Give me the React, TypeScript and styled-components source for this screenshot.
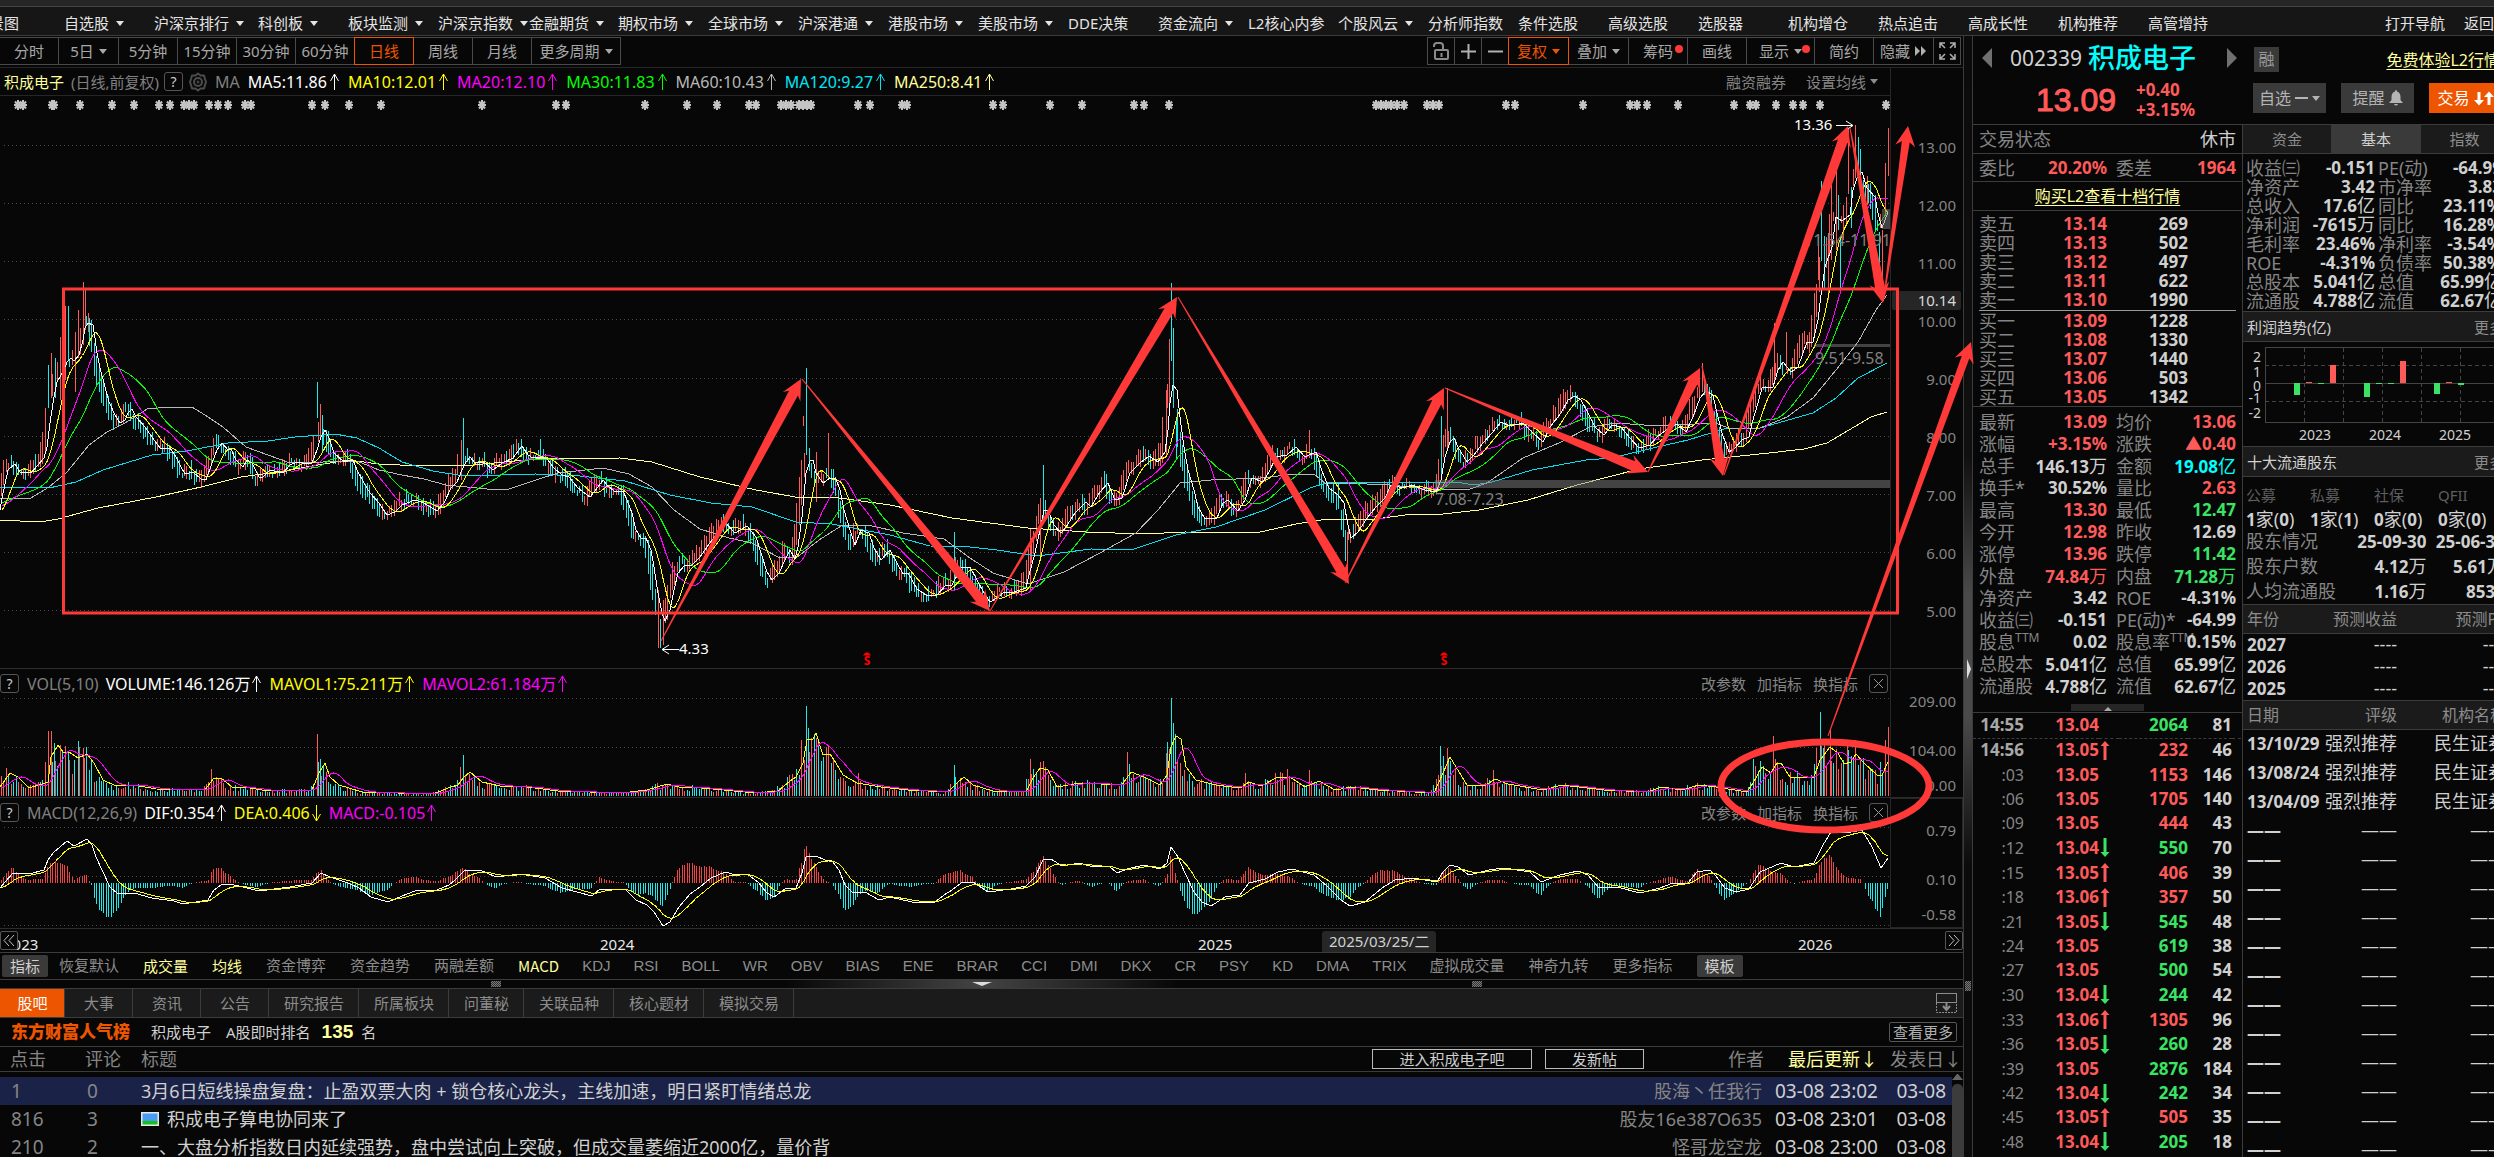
import React from "react";
import styled, { createGlobalStyle } from "styled-components";

const UI = `"Noto Sans", "Noto Sans CJK SC", sans-serif`;
const ARIAL = `"Liberation Sans", "Noto Sans CJK SC", sans-serif`;
const C = {
  bg: "#070707",
  bar: "#161616",
  panel: "#1b1b1b",
  line: "#3c3c3c",
  soft: "#262626",
  text: "#d0d0d0",
  dim: "#858585",
  red: "#ff5a5a",
  green: "#3be364",
  cyan: "#00ffff",
  yellow: "#ffff9c",
  orange: "#ee5500",
  mark: "#ff3838",
};

const Global = createGlobalStyle`
  * { box-sizing: border-box; }
  body { margin: 0; background: ${C.bg}; font-family: ${UI}; font-size: 15px; line-height: 18px; color: ${C.text}; }
  button { font: inherit; color: inherit; background: none; border: 0; padding: 0; margin: 0; white-space: nowrap; cursor: pointer; }
  svg { display: block; }
  table { border-collapse: collapse; border-spacing: 0; }
  th, td { padding: 0; font-weight: 400; text-align: left; white-space: nowrap; }
`;

/* ---------- page frame ---------- */

const Page = styled.div`
  display: flex;
  flex-direction: column;
  height: 100vh;
  overflow: hidden;
`;
const TitleStrip = styled.div`
  flex: none;
  height: 7px;
  background: #262626;
  border-bottom: 1px solid #444;
`;
const MenuBar = styled.nav`
  flex: none;
  display: flex;
  height: 29px;
  margin-left: -26px;
  padding-top: 4px;
  background: ${C.bar};
  border-bottom: 1px solid ${C.line};
`;
const MenuItem = styled.button<{ $w: number }>`
  flex: none;
  width: ${(p) => p.$w}px;
  display: flex;
  align-items: center;
  gap: 7px;
  color: #e4e4e4;
`;
const MenuEnd = styled.div`
  display: flex;
  gap: 19px;
  margin-left: auto;
  color: #e4e4e4;
`;
const Caret = styled.i<{ $color?: string }>`
  flex: none;
  border: 4px solid transparent;
  border-top: 5px solid ${(p) => p.$color || "#e4e4e4"};
  border-bottom: 0;
`;
const Body = styled.div`
  flex: 1;
  display: flex;
  min-height: 0;
`;
const Left = styled.main`
  flex: 1;
  min-width: 0;
  border-right: 1px solid ${C.line};
`;
const Splitter = styled.div`
  position: relative;
  flex: none;
  width: 8px;
  background: linear-gradient(#0b0b0b 0, #101010 420px, #4a4a4a 560px, #4a4a4a 680px, #0b0b0b 830px);
`;
const SplitArrow = styled.i`
  position: absolute;
  left: 3px;
  top: 623px;
  border: 10px solid transparent;
  border-left: 4px solid #ddd;
  border-right: 0;
`;
const Grip = styled.i<{ $x: string; $y: string; $w: number; $h: number }>`
  position: absolute;
  left: ${(p) => p.$x};
  top: ${(p) => p.$y};
  width: ${(p) => p.$w}px;
  height: ${(p) => p.$h}px;
  background: repeating-conic-gradient(#777 0 25%, #333 0 50%) 0 0 / 2px 2px;
`;

/* ---------- chart toolbar ---------- */

const Toolbar = styled.div`
  display: flex;
  justify-content: space-between;
  height: 32px;
  padding: 1px 2px 0 0;
  border-bottom: 1px solid ${C.soft};
`;
const ToolGroup = styled.div`
  display: flex;
  height: 28px;
`;
const Tool = styled.button<{ $w: number; $on?: boolean }>`
  position: relative;
  display: flex;
  align-items: center;
  justify-content: center;
  gap: 5px;
  width: ${(p) => p.$w + 1}px;
  margin-left: -1px;
  z-index: ${(p) => (p.$on ? 1 : 0)};
  border: 1px solid ${(p) => (p.$on ? C.orange : "#4a4a4a")};
  color: ${(p) => (p.$on ? C.orange : "#a8a8a8")};
`;
const Dot = styled.i`
  position: absolute;
  right: 4px;
  top: 7px;
  width: 8px;
  height: 8px;
  border-radius: 4px;
  background: ${C.mark};
`;

/* ---------- chart panes ---------- */

const Charts = styled.section`
  position: relative;
`;
const Pane = styled.div`
  display: grid;
  grid-template-columns: minmax(0, 1fr) 73px;
  border-bottom: 1px solid #2c2c2c;
`;
const PaneHead = styled.header<{ $h: number; $rule?: boolean }>`
  display: flex;
  align-items: center;
  height: ${(p) => p.$h}px;
  padding-left: ${(p) => (p.$rule ? 4 : 0)}px;
  border-bottom: ${(p) => (p.$rule ? `1px solid ${C.soft}` : 0)};
  font-size: 16px;
  line-height: 20px;
  white-space: nowrap;
`;
const StockName = styled.span`
  font-size: 15px;
  color: ${C.yellow};
  margin-right: 7px;
`;
const Faint = styled.span`
  color: #808080;
  margin-right: 8px;
`;
const FaintSmall = styled(Faint)`
  font-size: 15px;
  margin-right: 5px;
`;
const HelpBox = styled.button`
  flex: none;
  width: 19px;
  height: 19px;
  border: 1px solid #555;
  border-radius: 3px;
  line-height: 17px;
  font-size: 14px;
  color: #ccc;
`;
const SubHelp = styled(HelpBox)`
  margin-right: 8px;
`;
const HeadValue = styled.span<{ $c: string }>`
  display: flex;
  align-items: center;
  gap: 2px;
  margin-right: 8px;
  color: ${(p) => p.$c};
`;
const SubValue = styled(HeadValue)`
  gap: 1px;
  margin-right: 7px;
`;
const GearSlot = styled.span`
  margin: 0 8px 0 6px;
`;
const HeadRight = styled.div`
  display: flex;
  align-items: center;
  gap: 11px;
  margin-left: auto;
  padding-right: 2px;
  font-size: 15px;
  color: ${C.dim};
`;
const AverageTools = styled(HeadRight)`
  gap: 20px;
  padding-right: 12px;
`;
const CaretTool = styled.button`
  display: flex;
  align-items: center;
  gap: 4px;
`;
const CloseBox = styled(HelpBox)`
  display: grid;
  place-items: center;
`;
const Plot = styled.svg<{ $h: number }>`
  width: 100%;
  height: ${(p) => p.$h}px;
`;
const PriceAxis = styled.ol`
  position: relative;
  list-style: none;
  margin: 0;
  padding: 50px 7px 0 0;
  border-left: 1px solid ${C.soft};
  text-align: right;
  color: ${C.dim};
`;
const PriceTick = styled.li`
  line-height: 58px;
`;
const PriceTag = styled.li`
  position: absolute;
  top: 223px;
  left: 1px;
  right: 2px;
  padding-right: 5px;
  line-height: 19px;
  border-radius: 2px;
  background: #262626;
  color: #d8d8d8;
`;
const SubAxis = styled.ol<{ $boxed?: boolean }>`
  list-style: none;
  display: grid;
  grid-template-rows: 49px 49px 22px;
  align-items: center;
  align-content: start;
  margin: 0;
  padding: 6px 6px 0 0;
  border: 1px solid ${(p) => (p.$boxed ? C.soft : "transparent")};
  border-left-color: ${C.soft};
  text-align: right;
  color: ${C.dim};
`;
const Overlay = styled.svg`
  position: absolute;
  left: 0;
  top: 0;
  width: 100%;
  height: 861px;
  overflow: visible;
  pointer-events: none;
  z-index: 3;
`;
const DateAxis = styled.div`
  position: relative;
  display: grid;
  grid-template-columns: 596fr 598fr 600fr 169fr;
  height: 24px;
  padding-top: 5px;
  border-bottom: 1px solid ${C.line};
  color: #e8e8e8;
`;
const Year = styled.span`
  padding-left: 4px;
  line-height: 20px;
`;
const DateTag = styled.span`
  position: absolute;
  left: 67%;
  top: 2px;
  margin-left: 7px;
  width: 114px;
  line-height: 21px;
  text-align: center;
  border-radius: 3px 3px 0 0;
  background: #262626;
  color: ${C.text};
`;
const PageButton = styled.button<{ $side: "left" | "right" }>`
  position: absolute;
  ${(p) => p.$side}: 0;
  top: 2px;
  width: 18px;
  height: 19px;
  display: grid;
  place-items: center;
  border: 1px solid #555;
  border-radius: 2px;
  background: ${C.bg};
`;

/* ---------- indicator tabs ---------- */

const Indicators = styled.div`
  display: flex;
  align-items: center;
  gap: 24px;
  height: 27px;
  padding-left: 2px;
  border-bottom: 1px solid ${C.line};
`;
const Indicator = styled.button<{ $on?: boolean; $latin?: boolean }>`
  margin-right: ${(p) => (p.$latin ? -1 : 0)}px;
  font-family: ${(p) => (p.$on ? `"Noto Sans CJK SC", sans-serif` : ARIAL)};
  color: ${(p) => (p.$on ? C.yellow : "#8c8c8c")};
`;
const IndicatorChip = styled.button`
  width: 46px;
  height: 22px;
  background: #3a3a3a;
  border-radius: 2px;
  color: ${C.text};
  &:first-child { margin-right: -13px; }
`;
const HSplit = styled.div`
  position: relative;
  height: 9px;
  border-bottom: 1px solid ${C.line};
  background: linear-gradient(90deg, ${C.bg} 40%, #444 50%, ${C.bg} 60%);
  display: flex;
  justify-content: center;
  padding-top: 2px;
`;
const HArrow = styled.i`
  height: 4px;
  border: 10px solid transparent;
  border-top: 4px solid #ddd;
  border-bottom: 0;
`;

/* ---------- forum ---------- */

const NewsTabs = styled.div`
  display: flex;
  align-items: stretch;
  height: 29px;
  background: ${C.panel};
  border-bottom: 1px solid ${C.line};
`;
const NewsTab = styled.button<{ $on?: boolean }>`
  min-width: ${(p) => (p.$on ? 65 : 68)}px;
  padding: 0 14px 0 15px;
  border-right: 1px solid ${C.line};
  background: ${(p) => (p.$on ? C.orange : "none")};
  color: ${(p) => (p.$on ? "#fff" : "#8c8c8c")};
`;
const DockButton = styled.button`
  margin: 0 6px 0 auto;
`;
const RankRow = styled.div`
  display: flex;
  align-items: center;
  height: 29px;
  padding: 0 6px 0 11px;
  border-bottom: 1px solid ${C.line};
`;
const RankLogo = styled.strong`
  width: 140px;
  font-size: 17px;
  font-weight: 900;
  color: ${C.orange};
`;
const RankName = styled.span`
  margin-right: 15px;
`;
const RankNumber = styled.strong`
  margin: 0 8px 0 11px;
  font-family: ${ARIAL};
  font-size: 19px;
  color: ${C.yellow};
`;
const MoreButton = styled.button`
  margin-left: auto;
  width: 68px;
  height: 20px;
  line-height: 18px;
  border: 1px solid #555;
  border-radius: 2px;
  color: #b0b0b0;
`;
const Forum = styled.div`
  position: relative;
`;
const PostTable = styled.table`
  width: 100%;
  table-layout: fixed;
  font-size: 18px;
  line-height: 22px;
`;
const PostHead = styled.thead`
  color: ${C.dim};
  th { height: 24px; border-bottom: 1px solid ${C.line}; }
`;
const Spacer = styled.tr`
  height: 6px;
`;
const PostRow = styled.tr<{ $on?: boolean }>`
  height: 28px;
  background: ${(p) => (p.$on ? "#1a2347" : "none")};
`;
const NumCell = styled.td<{ $pad: number }>`
  padding-left: ${(p) => p.$pad}px;
  font-size: 19px;
  color: ${C.dim};
`;
const HeadCell = styled.th<{ $pad?: number; $right?: number; $hot?: boolean }>`
  padding-left: ${(p) => p.$pad || 0}px;
  ${(p) => p.$right !== undefined && `text-align: right; padding-right: ${p.$right}px;`}
  ${(p) => p.$hot && `color: ${C.yellow};`}
`;
const TitleHead = styled.div`
  display: flex;
  align-items: center;
  gap: 13px;
  padding-right: 1px;
`;
const TitleLabel = styled.span`
  flex: 1;
`;
const OutlineButton = styled.button<{ $w: number }>`
  width: ${(p) => p.$w}px;
  height: 20px;
  line-height: 18px;
  font-size: 15px;
  border: 1px solid #bbb;
  color: ${C.text};
`;
const TitleCell = styled.td`
  overflow: hidden;
`;
const PostTitle = styled.a`
  display: flex;
  align-items: center;
  gap: 8px;
  color: ${C.text};
  text-decoration: none;
`;
const EndCell = styled.td<{ $right: number; $dim?: boolean }>`
  text-align: right;
  padding-right: ${(p) => p.$right}px;
  font-size: ${(p) => (p.$dim ? 18 : 19)}px;
  color: ${(p) => (p.$dim ? C.dim : C.text)};
`;
const ScrollTrack = styled.div`
  position: absolute;
  right: 0;
  top: 27px;
  bottom: 0;
  width: 11px;
  background: ${C.bg};
`;
const ScrollUp = styled.i`
  display: block;
  border: 5px solid transparent;
  border-bottom: 6px solid #666;
  border-top: 0;
  margin-bottom: 4px;
`;
const ScrollThumb = styled.i`
  display: block;
  height: 400px;
  background: #3c3c3c;
  border-radius: 5px 5px 0 0;
`;

/* ---------- quote panel ---------- */

const Right = styled.aside`
  flex: none;
  width: 522px;
  overflow: hidden;
  border-left: 1px solid ${C.line};
`;
const QuoteHead = styled.header`
  display: grid;
  grid-template-columns: 270px 265px;
  height: 89px;
  border-bottom: 1px solid ${C.line};
`;
const QuoteName = styled.div`
  display: flex;
  align-items: center;
  height: 44px;
  padding: 0 6px 0 9px;
`;
const Prev = styled.button`
  border: 10px solid transparent;
  border-right: 10px solid #707070;
  border-left: 0;
`;
const Next = styled.button`
  margin-left: auto;
  border: 10px solid transparent;
  border-left: 10px solid #707070;
  border-right: 0;
`;
const Code = styled.span`
  margin: 0 6px 0 18px;
  font-size: 21px;
`;
const Name = styled.strong`
  font-size: 27px;
  line-height: 32px;
  font-weight: 500;
  color: ${C.cyan};
`;
const QuotePrice = styled.div`
  display: flex;
  align-items: center;
  gap: 20px;
  padding: 0 0 0 63px;
  font-weight: 700;
  font-size: 17px;
  line-height: 20px;
  color: ${C.red};
`;
const BigPrice = styled.span`
  font-family: ${ARIAL};
  font-size: 32px;
  font-weight: 400;
  line-height: 32px;
  -webkit-text-stroke: 1px ${C.red};
`;
const Stack = styled.div`
  display: flex;
  flex-direction: column;
`;
const HeadTop = styled.div`
  display: flex;
  justify-content: space-between;
  align-items: center;
  height: 47px;
  padding: 0 8px 0 11px;
`;
const Badge = styled.span`
  width: 25px;
  line-height: 25px;
  text-align: center;
  font-size: 16px;
  background: #3a3a3a;
  color: #999;
`;
const Link = styled.a`
  font-size: 16px;
  color: ${C.yellow};
  text-underline-offset: 3px;
  white-space: nowrap;
`;
const HeadActions = styled.div`
  display: flex;
  gap: 15px;
  padding-left: 10px;
`;
const Action = styled.button<{ $hot?: boolean }>`
  display: flex;
  align-items: center;
  justify-content: center;
  gap: 4px;
  width: 73px;
  height: 30px;
  font-size: 16px;
  background: ${(p) => (p.$hot ? C.orange : "#3a3a3a")};
  color: ${(p) => (p.$hot ? "#fff" : "#b4b4b4")};
`;
const Dash = styled.i`
  width: 13px;
  height: 2px;
  background: #b4b4b4;
`;
const Columns = styled.div`
  display: grid;
  grid-template-columns: 270px 265px;
`;
const ColA = styled.section`
  border-right: 1px solid ${C.line};
`;
const ColB = styled.section`
  min-width: 0;
`;
const Status = styled.div<{ $h: number }>`
  display: flex;
  align-items: center;
  justify-content: space-between;
  height: ${(p) => p.$h}px;
  padding: 0 6px;
  font-size: 18px;
  border-bottom: 1px solid ${C.line};
`;
const LinkRow = styled(Status)`
  justify-content: center;
`;
const Label = styled.span`
  color: ${C.dim};
  font-size: 18px;
  font-weight: 400;
`;
const Bold = styled.span<{ $c?: string }>`
  font-size: 17px;
  font-weight: 700;
  color: ${(p) => p.$c || C.text};
  text-align: right;
`;
const Thin = styled.span`
  font-weight: 400;
  font-size: 18px;
`;
const Book = styled.div<{ $sell?: boolean }>`
  margin: 0 6px;
  padding: ${(p) => (p.$sell ? "3px 0 1px" : "0")};
  border-bottom: ${(p) => (p.$sell ? "1px solid #999" : 0)};
`;
const BookRow = styled.div`
  display: grid;
  grid-template-columns: 40px 88px 81px;
  align-items: center;
  height: 19px;
`;
const Pairs = styled.div<{ $h: number; $pad: string; $cols: string }>`
  display: grid;
  grid-template-columns: ${(p) => p.$cols};
  grid-auto-rows: ${(p) => p.$h}px;
  align-items: center;
  padding: ${(p) => p.$pad};
  border-bottom: 1px solid ${C.line};
  white-space: nowrap;
`;
const QuotePairs = styled(Pairs)`
  border-top: 1px solid ${C.line};
  border-bottom: 0;
`;
const QuoteValue = styled.span`
  display: flex;
  justify-content: flex-end;
`;
const Sup = styled.sup`
  font-size: 12px;
  line-height: 10px;
`;
const FoldRow = styled.div`
  height: 16px;
  padding-top: 7px;
  border-bottom: 1px solid ${C.line};
`;
const Fold = styled.button`
  display: flex;
  justify-content: center;
  width: 73px;
  height: 7px;
  margin: 0 auto;
  padding-top: 1px;
  background: #262626;
`;
const FoldMark = styled.i`
  border: 4px solid transparent;
  border-bottom: 4px solid #aaa;
  border-top: 0;
`;
const Ticks = styled.table`
  width: 268px;
  table-layout: fixed;
`;
const TickRow = styled.tr`
  height: 24px;
  &:nth-child(3n) { height: 25px; }
  &:nth-child(6n + 1) { height: 25px; }
  &:first-child td { border-bottom: 1px dashed ${C.line}; }
`;
const TickCell = styled.td<{ $c?: string; $thin?: boolean }>`
  text-align: right;
  font-size: ${(p) => (p.$thin ? 16 : 17)}px;
  font-weight: ${(p) => (p.$thin ? 400 : 700)};
  color: ${(p) => p.$c || C.text};
`;
const TickArrow = styled.td`
  padding-left: 1px;
`;
const BTabs = styled.div`
  display: grid;
  grid-template-columns: 88px 90px 87px;
  height: 29px;
  border-bottom: 1px solid ${C.line};
  background: ${C.panel};
`;
const BTab = styled.button<{ $on?: boolean }>`
  background: ${(p) => (p.$on ? "#3a3a3a" : "none")};
  color: ${(p) => (p.$on ? C.text : "#8c8c8c")};
`;
const SectionHead = styled.h3`
  display: flex;
  align-items: center;
  justify-content: space-between;
  height: 30px;
  margin: 0;
  padding: 0 4px;
  font-size: 15px;
  font-weight: 400;
  background: ${C.panel};
  border-bottom: 1px solid ${C.line};
`;
const MoreLink = styled.a`
  color: #8c8c8c;
  text-decoration: none;
`;
const ProfitBox = styled.div`
  border-bottom: 1px solid ${C.line};
`;
const ProfitChart = styled.svg`
  width: 265px;
  height: 104px;
`;
const Funds = styled.table`
  width: 256px;
  margin-left: 3px;
  table-layout: fixed;
  th { height: 32px; padding-top: 3px; font-size: 15px; color: #5e5e5e; }
  td { height: 20px; }
`;
const Holders = styled.table`
  width: 259px;
  margin-left: 3px;
  th, td { height: 25px; }
  td { text-align: right; }
`;
const Report = styled.table<{ $row: number }>`
  width: 265px;
  table-layout: fixed;
  border-top: 1px solid ${C.line};
  thead tr { height: 29px; background: ${C.panel}; }
  thead th { border-bottom: 1px solid ${C.line}; font-size: 16px; color: #8c8c8c; }
  tbody tr { height: ${(p) => p.$row}px; }
  th:first-child, td:first-child { padding-left: 4px; }
  th:nth-child(2), td:nth-child(2) { text-align: right; }
  th:last-child, td:last-child { text-align: right; padding-right: 2px; }
`;

/* ---------- series ---------- */

type Pt = [number, number];
const parse = (s: string): Pt[] => s.trim().split(/\s+/).map((p) => p.split(",").map(Number) as Pt);

const MA5 = parse(`-90,500 -30,496 -14,514 0,510 2,498 8,470 15,464 20,472 31,473 38,465 44,458 47,447 50,423 54,397 57,382 61,375 64,370 67,362 71,358 74,361 79,355 83,340 85,328 88,323 93,325 95,338 97,353 100,368 104,383 109,402 115,415 120,423 125,420 128,413 132,409 136,417 145,427 152,437 160,448 170,448 176,457 181,467 185,474 193,472 201,479 206,480 212,463 217,450 222,443 228,450 231,449 236,460 243,467 247,460 252,463 259,477 263,477 270,470 283,473 290,465 297,462 308,464 312,463 317,450 321,437 325,430 329,438 334,453 344,462 353,460 357,470 364,483 370,493 379,503 387,515 395,512 402,505 415,500 424,503 437,511 444,503 451,488 457,482 462,470 466,462 470,457 475,463 484,462 493,470 502,463 513,458 522,446 528,455 533,458 540,457 547,459 554,468 562,475 569,477 578,488 590,497 598,487 603,480 607,485 615,492 623,491 627,500 632,513 636,530 641,538 646,538 651,550 654,567 658,593 662,613 665,621 670,610 674,590 678,573 685,565 692,565 700,557 707,547 716,535 725,522 735,533 747,526 756,537 761,553 767,572 772,580 779,573 785,560 790,550 795,559 798,547 802,517 806,473 810,461 813,460 816,473 823,483 830,478 836,479 840,490 844,510 850,530 855,545 861,530 869,533 874,548 881,560 890,550 897,563 903,574 908,573 917,589 926,595 937,595 946,585 952,585 961,568 970,567 977,580 984,593 990,602 997,598 1004,592 1011,593 1026,588 1029,575 1035,553 1040,530 1044,510 1048,510 1054,525 1061,533 1066,527 1075,513 1086,502 1091,507 1100,492 1108,483 1115,500 1122,498 1130,473 1140,463 1149,456 1158,462 1165,452 1168,430 1170,403 1173,385 1177,390 1180,417 1184,447 1188,470 1194,490 1198,507 1205,519 1217,518 1223,503 1228,500 1238,511 1245,500 1252,478 1263,482 1269,472 1276,457 1287,455 1296,447 1305,457 1316,452 1322,471 1329,488 1338,495 1344,503 1347,520 1351,538 1358,532 1367,518 1376,507 1385,498 1391,485 1403,488 1412,485 1425,490 1436,492 1441,480 1445,457 1450,442 1454,438 1458,447 1467,462 1474,455 1483,443 1492,433 1501,422 1510,426 1523,423 1532,432 1543,442 1550,427 1561,413 1568,400 1575,396 1581,400 1588,413 1595,427 1604,435 1612,425 1621,427 1630,438 1639,448 1650,445 1657,437 1666,430 1677,424 1686,432 1693,417 1700,398 1706,391 1713,395 1717,413 1722,433 1729,452 1735,448 1742,440 1749,437 1752,423 1758,403 1762,388 1773,387 1778,370 1783,362 1791,372 1798,367 1807,342 1813,342 1818,320 1821,295 1825,267 1832,247 1836,217 1842,221 1850,215 1853,190 1857,178 1862,172 1867,188 1875,197 1878,213 1882,228 1888,212`);
const MA60 = `0,499 31,498 49,487 67,472 89,445 107,432 125,423 147,409 170,407 192,407 205,415 223,427 246,447 268,455 290,463 357,461 379,470 402,475 424,479 446,485 487,489 509,489 536,480 558,473 603,468 629,474 652,487 674,510 700,529 729,538 752,543 778,557 796,558 819,540 841,526 868,525 903,533 944,539 970,558 993,573 1028,584 1064,572 1100,553 1136,533 1158,510 1180,483 1211,480 1261,478 1287,475 1314,474 1325,483 1345,483 1389,485 1438,490 1470,489 1487,483 1523,458 1559,443 1590,427 1617,423 1657,426 1715,423 1729,428 1760,428 1787,417 1813,398 1836,370 1858,342 1876,310 1887,295`;
const MA120 = `0,488 27,487 49,488 76,482 103,470 152,455 187,451 228,443 268,441 295,437 335,434 357,438 379,448 402,462 433,471 464,476 536,474 580,476 625,481 670,495 711,503 752,507 796,522 832,524 863,530 890,535 930,546 970,547 997,550 1037,556 1091,549 1131,550 1176,535 1216,527 1265,510 1310,488 1329,482 1456,482 1474,485 1492,482 1532,470 1586,460 1612,458 1657,447 1688,440 1724,429 1760,428 1813,413 1836,398 1858,378 1887,363`;
const MA250 = `0,520 40,522 58,519 98,508 156,497 201,487 241,477 277,472 348,460 379,464 420,466 473,465 536,459 620,458 652,462 700,477 756,490 801,498 832,497 890,505 952,518 1028,528 1086,532 1144,534 1185,532 1256,533 1296,524 1327,519 1376,519 1412,514 1443,514 1479,510 1528,500 1577,485 1639,469 1702,460 1769,453 1804,449 1827,443 1849,430 1871,417 1887,412`;
const VOLMA = parse(`-30,790 0,787 10,773 18,777 29,788 42,784 48,782 51,757 58,745 64,753 69,752 78,758 87,754 94,763 103,780 116,786 134,785 156,789 205,790 214,778 221,778 232,787 250,788 268,791 312,790 319,773 325,763 330,777 339,785 362,792 433,794 451,787 458,785 464,777 470,772 482,782 500,786 527,787 558,791 621,793 647,790 667,784 679,787 702,788 756,793 778,791 790,781 796,777 803,763 807,740 813,739 816,733 823,755 830,754 836,763 843,775 857,783 881,787 908,790 948,792 957,783 964,777 973,785 993,791 1026,792 1033,778 1040,768 1048,770 1057,787 1080,783 1122,785 1131,772 1144,777 1160,785 1167,775 1171,747 1176,736 1181,739 1186,767 1196,780 1216,785 1240,788 1249,782 1261,786 1278,777 1290,777 1305,787 1319,781 1335,790 1352,787 1378,790 1434,793 1443,773 1450,757 1456,767 1467,785 1486,785 1495,779 1508,784 1543,790 1562,785 1604,790 1647,792 1662,787 1682,790 1699,785 1716,787 1747,792 1753,783 1762,767 1771,773 1777,763 1781,763 1790,777 1814,777 1820,760 1830,747 1838,753 1844,764 1851,762 1856,754 1864,763 1877,775 1882,775 1888,762`);
const DIF = parse(`-30,888 0,888 5,882 13,873 29,874 44,870 48,860 54,852 67,841 74,846 87,839 92,845 96,857 103,872 110,887 118,894 134,893 152,898 174,901 183,904 196,902 208,900 214,890 221,885 230,884 243,887 259,891 290,887 312,883 321,873 330,877 348,883 359,888 371,897 388,902 402,896 415,891 437,890 449,885 455,880 464,871 480,870 496,877 520,874 545,878 562,888 592,896 600,889 625,889 636,900 647,905 654,912 663,926 670,922 679,907 690,894 700,887 711,878 725,872 736,875 747,874 758,882 767,893 774,897 785,889 796,888 802,873 806,857 816,856 825,860 832,861 839,870 845,885 852,892 865,892 879,900 890,897 912,902 935,902 944,895 952,890 961,883 973,882 988,892 1011,889 1026,886 1035,877 1043,860 1051,859 1062,866 1080,863 1093,867 1109,866 1117,873 1127,869 1144,865 1160,869 1167,863 1171,847 1178,857 1185,873 1194,892 1202,902 1211,906 1225,897 1240,895 1249,883 1265,879 1278,872 1292,869 1314,875 1327,886 1341,900 1350,906 1365,902 1382,888 1395,880 1413,878 1437,882 1443,872 1450,865 1458,867 1469,875 1489,870 1504,868 1530,872 1541,882 1560,875 1578,871 1588,875 1599,888 1617,887 1640,893 1660,888 1673,883 1688,883 1697,872 1710,870 1716,876 1725,888 1736,892 1749,889 1760,872 1781,863 1794,867 1814,863 1823,845 1831,832 1846,833 1862,830 1872,847 1881,868 1888,858`);

/* [x, high, low, up] */
const SPIKES: [number, number, number, number][] = [
  [48, 365, 408, 0], [51, 353, 398, 1], [55, 358, 398, 0], [60, 337, 400, 1], [65, 306, 380, 1], [68, 306, 360, 0], [75, 332, 392, 1], [78, 310, 358, 1], [80, 328, 354, 1], [83, 282, 345, 1], [85, 288, 330, 1], [88, 313, 332, 1], [91, 320, 352, 0],
  [317, 382, 418, 0], [320, 404, 440, 1], [322, 415, 452, 0], [461, 440, 480, 1], [463, 418, 468, 0], [540, 439, 460, 0],
  [658, 590, 648, 1], [660, 619, 648, 0], [663, 600, 645, 1], [803, 416, 426, 1], [806, 368, 455, 0], [801, 460, 505, 1], [828, 433, 480, 1], [816, 452, 502, 1],
  [954, 532, 590, 0], [1030, 528, 590, 1], [1043, 465, 520, 0], [1040, 498, 560, 1], [1166, 390, 455, 1], [1169, 339, 405, 1], [1171, 283, 361, 0], [1173, 328, 408, 0], [1176, 418, 460, 0],
  [1309, 430, 458, 1], [1345, 530, 561, 0], [1347, 532, 580, 1], [1341, 510, 530, 0], [1441, 416, 475, 0], [1447, 388, 450, 1], [1702, 363, 392, 1], [1704, 378, 395, 0],
  [1774, 323, 380, 1], [1786, 332, 370, 1], [1818, 237, 280, 1], [1821, 181, 261, 0], [1824, 236, 290, 0], [1828, 233, 300, 1], [1831, 185, 260, 1], [1836, 168, 250, 1], [1838, 195, 230, 0], [1840, 240, 290, 0], [1843, 205, 240, 1], [1848, 128, 194, 1], [1851, 187, 228, 0], [1855, 125, 178, 1], [1858, 137, 172, 0], [1860, 149, 190, 0],
  [1867, 176, 205, 1], [1875, 195, 230, 0], [1879, 232, 285, 0], [1882, 230, 300, 1], [1885, 163, 215, 1], [1888, 128, 176, 1],
];
const VOL_SPIKES: [number, number, number][] = [
  [48, 731, 1], [51, 731, 1], [54, 743, 0], [60, 745, 1], [65, 746, 1], [68, 752, 0], [78, 741, 0], [83, 748, 1], [211, 769, 1], [317, 734, 1], [320, 759, 0], [460, 767, 1], [463, 755, 0], [801, 740, 1], [806, 706, 0], [808, 728, 0], [816, 738, 1], [828, 745, 1], [858, 773, 1], [954, 765, 0], [1030, 759, 1], [1040, 762, 1], [1043, 761, 1], [1127, 752, 1], [1129, 764, 0], [1166, 753, 1], [1169, 749, 1], [1171, 698, 0], [1173, 723, 0], [1245, 773, 1], [1287, 769, 1], [1309, 770, 1], [1440, 746, 0], [1447, 748, 1], [1493, 770, 1], [1753, 759, 0], [1773, 736, 1], [1820, 712, 0], [1823, 748, 0], [1830, 730, 1], [1847, 743, 1], [1855, 740, 1], [1885, 740, 1], [1888, 727, 1],
];

const at = (pts: Pt[], x: number) => {
  if (x <= pts[0][0]) return pts[0][1];
  for (let i = 1; i < pts.length; i++) {
    if (x <= pts[i][0]) {
      const [ax, ay] = pts[i - 1];
      const [bx, by] = pts[i];
      return ay + ((by - ay) * (x - ax)) / (bx - ax || 1);
    }
  }
  return pts[pts.length - 1][1];
};
const noise = (seed: number) => {
  const v = Math.sin(seed * 127.1 + 11.7) * 43758.5453;
  return v - Math.floor(v);
};

const STEP = 2.44;
const XS = Array.from({ length: 774 }, (_, i) => Math.round(i * STEP + 1) + 0.5);
const trailing = (pts: Pt[], bars: number) =>
  XS.map((x) => {
    let sum = 0;
    for (let k = 0; k <= bars; k++) sum += at(pts, x - k * STEP);
    return `${x},${(sum / (bars + 1)).toFixed(1)}`;
  }).join(" ");

const near = (list: { 0: number }[], x: number) => list.some((s) => Math.abs(s[0] - x) < 1.3);

function candles() {
  const d = ["", ""];
  XS.forEach((x, i) => {
    if (near(SPIKES, x)) return;
    const p = at(MA5, x + 4);
    const slope = at(MA5, x + 7) - at(MA5, x + 2);
    const up = slope + (noise(i) - 0.5) * 14 < 0 ? 0 : 1;
    const reach = 1 + Math.abs(slope) * 0.4;
    const drift = (noise(i + 400) - 0.5) * 6;
    const hi = p + drift - reach - noise(i + 900) * 9;
    const lo = p + drift + reach + noise(i + 1900) * 6;
    d[up] += `M${x} ${hi.toFixed(0)}V${lo.toFixed(0)}`;
  });
  SPIKES.forEach(([x, h, l, up]) => (d[up ? 0 : 1] += `M${x + 0.5} ${h}V${l}`));
  return d;
}
function volumes() {
  const d = ["", ""];
  XS.forEach((x, i) => {
    if (near(VOL_SPIKES, x)) return;
    const h = (796 - at(VOLMA, x + 4)) * (0.55 + noise(i + 77) * 0.75);
    d[noise(i) > 0.5 ? 0 : 1] += `M${x} 796V${(796 - h).toFixed(0)}`;
  });
  VOL_SPIKES.forEach(([x, y, up]) => (d[up ? 0 : 1] += `M${x + 0.5} 796V${y}`));
  return d;
}
function macd() {
  const d = ["", ""];
  let dea = 888;
  const line: string[] = [];
  XS.forEach((x) => {
    const v = at(DIF, x);
    dea += (v - dea) * 0.2;
    line.push(`${x},${dea.toFixed(1)}`);
    const h = Math.round((dea - v) * 2);
    if (h) d[h > 0 ? 0 : 1] += `M${x} 883V${883 - h}`;
  });
  return { d, line: line.join(" ") };
}

const CANDLES = candles();
const VOLUMES = volumes();
const MACD = macd();
const STARS = [18, 23, 52, 54, 80, 112, 134, 159, 170, 184, 189, 194, 209, 218, 228, 245, 251, 312, 325, 349, 381, 482, 556, 566, 645, 687, 717, 749, 756, 781, 786, 791, 799, 803, 807, 811, 858, 870, 902, 907, 993, 1003, 1050, 1082, 1134, 1144, 1169, 1376, 1381, 1386, 1391, 1397, 1404, 1427, 1433, 1439, 1506, 1515, 1583, 1630, 1637, 1647, 1678, 1734, 1750, 1756, 1776, 1793, 1803, 1820, 1886];

const arrow = (x1: number, y1: number, x2: number, y2: number, neck = 5) => {
  const len = Math.hypot(x2 - x1, y2 - y1);
  const ux = (x2 - x1) / len;
  const uy = (y2 - y1) / len;
  const p = (along: number, side: number) =>
    `${(x1 + ux * along - uy * side).toFixed(1)},${(y1 + uy * along + ux * side).toFixed(1)}`;
  return [p(0, -0.5), p(len - 16, -neck), p(len - 20, -10), p(len, 0), p(len - 20, 10), p(len - 16, neck), p(0, 0.5)].join(" ");
};
const ARROWS = [
  arrow(661, 641, 801, 379), arrow(802, 379, 990, 611), arrow(990, 611, 1177, 297), arrow(1178, 297, 1349, 584),
  arrow(1345, 583, 1444, 388), arrow(1445, 388, 1648, 472), arrow(1648, 472, 1700, 368), arrow(1702, 366, 1723, 476),
  arrow(1724, 475, 1848, 126), arrow(1850, 128, 1883, 303), arrow(1884, 297, 1908, 126, 4), arrow(1828, 736, 1971, 342, 4),
];

const Grid = ({ ys }: { ys: number[] }) => (
  <g stroke="#4a4a4a" strokeDasharray="1 3" shapeRendering="crispEdges">
    {ys.map((y) => (
      <line key={y} x1="4" x2="1890" y1={y + 0.5} y2={y + 0.5} />
    ))}
  </g>
);
const Bars = ({ d, up = "#ff5a5a" }: { d: string[]; up?: string }) => (
  <g fill="none" shapeRendering="crispEdges">
    <path d={d[0]} stroke={up} />
    <path d={d[1]} stroke="#1fe9e9" />
  </g>
);
const Line = ({ pts, c }: { pts: string; c: string }) => (
  <polyline points={pts} fill="none" stroke={c} strokeWidth="1" shapeRendering="crispEdges" />
);
const join = (pts: Pt[]) => pts.map((p) => p.join(",")).join(" ");

/* ---------- small icons ---------- */

const Trend = ({ down, c }: { down?: boolean; c: string }) => (
  <svg width="11" height="18" viewBox="0 0 11 18" fill="none" stroke={c}>
    <path d={down ? "M5.5 1V17M1.5 10L5.5 17L9.5 10" : "M5.5 17V1M1.5 8L5.5 1L9.5 8"} />
  </svg>
);
const Gear = () => (
  <svg width="18" height="20" viewBox="0 0 18 20" fill="none" stroke="#4c4c4c" strokeWidth="2">
    <path d="M9 1.5L11.500 3.500H15L16 7L17 10L16 13L15 16.500H11.500L9 18.500L6.500 16.500H3L2 13L1 10L2 7L3 3.500H6.500Z" strokeLinejoin="round" />
    <circle cx="9" cy="10" r="4" />
    <circle cx="9" cy="10" r="0.500" />
  </svg>
);
const Cross = () => (
  <svg width="11" height="11" viewBox="0 0 11 11" stroke="#999">
    <path d="M1 1L10 10M10 1L1 10" />
  </svg>
);
const Unlock = () => (
  <svg width="18" height="19" viewBox="0 0 18 19" fill="none" stroke="#8a8a8a" strokeWidth="2">
    <rect x="3" y="8" width="13" height="9" rx="1" />
    <path d="M2 5V4Q2 1 5 1H8Q11 1 11 4V8M9.500 11V15" />
  </svg>
);
const Plus = () => (
  <svg width="15" height="15" stroke="#b0b0b0" strokeWidth="2">
    <path d="M0 7.500H15M7.500 0V15" />
  </svg>
);
const Minus = () => (
  <svg width="15" height="15" stroke="#b0b0b0" strokeWidth="2">
    <path d="M0 7.500H15" />
  </svg>
);
const Expand = () => (
  <svg width="17" height="18" viewBox="0 0 17 18" fill="none" stroke="#b0b0b0" strokeWidth="1.500">
    <path d="M1 6V1H6M1 1L6 6M11 1H16V6M16 1L11 6M1 12V17H6M1 17L6 12M16 12V17H11M16 17L11 12" />
  </svg>
);
const Fast = () => (
  <svg width="12" height="10" fill="#b0b0b0">
    <path d="M0 0L5 5L0 10ZM6 0L11 5L6 10Z" />
  </svg>
);
const Chevrons = ({ flip }: { flip?: boolean }) => (
  <svg width="12" height="13" viewBox="0 0 12 13" fill="none" stroke="#c0c0c0">
    <path d={flip ? "M1 1L6 6.500L1 12M6 1L11 6.500L6 12" : "M6 1L1 6.500L6 12M11 1L6 6.500L11 12"} />
  </svg>
);
const Dock = () => (
  <svg width="21" height="20" viewBox="0 0 21 20" fill="none" stroke="#8c8c8c">
    <rect x="0.500" y="0.500" width="20" height="9" />
    <path d="M0.500 10V19.500H20.500V10" strokeDasharray="2 1" />
    <path d="M10.500 10V16M7 13L10.500 17L14 13" strokeWidth="2" />
  </svg>
);
const Bell = () => (
  <svg width="14" height="16" viewBox="0 0 14 16" fill="#b4b4b4">
    <path d="M7 0Q8 0 8 1.500Q11.500 2.500 11.500 7V10L14 13H0L2.500 10V7Q2.500 2.500 6 1.500Q6 0 7 0ZM5 14H9Q8.500 15.500 7 15.500Q5.500 15.500 5 14Z" />
  </svg>
);
const Swap = () => (
  <svg width="20" height="15" viewBox="0 0 20 15" fill="#fff">
    <path d="M3.500 1H6.500V9H10L5 14.500L0 9H3.500ZM13.500 14H16.500V6H20L15 0.500L10 6H13.500Z" />
  </svg>
);
const Picture = () => (
  <svg width="18" height="14" viewBox="0 0 18 14">
    <rect width="18" height="14" fill="#e8e8e8" />
    <rect x="1.500" y="1.500" width="15" height="8" fill="#4a9cf0" />
    <rect x="1.500" y="9" width="15" height="3.500" fill="#12c21a" />
  </svg>
);
const TickMark = ({ dir }: { dir: string }) => (
  <svg width="10" height="19" viewBox="0 0 10 19" fill={dir === "u" ? C.red : C.green}>
    <path d={dir === "u" ? "M5 0L9.500 5H6.500V19H3.500V5H0.500Z" : "M5 19L9.500 14H6.500V0H3.500V14H0.500Z"} />
  </svg>
);

/* ---------- content ---------- */

const MENU: [string, number, boolean][] = [
  ["全景图", 90, false], ["自选股", 90, true], ["沪深京排行", 104, true], ["科创板", 90, true], ["板块监测", 90, true], ["沪深京指数", 91, true], ["金融期货", 89, true],
  ["期权市场", 90, true], ["全球市场", 90, true], ["沪深港通", 90, true], ["港股市场", 90, true], ["美股市场", 90, true], ["DDE决策", 90, false],
  ["资金流向", 90, true], ["L2核心内参", 90, false], ["个股风云", 90, true], ["分析师指数", 90, false], ["条件选股", 90, false], ["高级选股", 90, false],
  ["选股器", 90, false], ["机构增仓", 90, false], ["热点追击", 90, false], ["高成长性", 90, false], ["机构推荐", 90, false], ["高管增持", 90, false],
];
const PERIODS: [string, number][] = [["分时", 59], ["5日", 60], ["5分钟", 59], ["15分钟", 59], ["30分钟", 59], ["60分钟", 59], ["日线", 59], ["周线", 59], ["月线", 59], ["更多周期", 89]];
const AVERAGES: [string, string][] = [["MA5:11.86", "#fff"], ["MA10:12.01", "#ff0"], ["MA20:12.10", "#f0f"], ["MA30:11.83", "#0f0"], ["MA60:10.43", "#b8b8b8"], ["MA120:9.27", "#00e5f5"], ["MA250:8.41", "#ffff9c"]];
const INDICATORS = ["恢复默认", "成交量", "均线", "资金博弈", "资金趋势", "两融差额", "MACD", "KDJ", "RSI", "BOLL", "WR", "OBV", "BIAS", "ENE", "BRAR", "CCI", "DMI", "DKX", "CR", "PSY", "KD", "DMA", "TRIX", "虚拟成交量", "神奇九转", "更多指标"];
const NEWS = ["股吧", "大事", "资讯", "公告", "研究报告", "所属板块", "问董秘", "关联品种", "核心题材", "模拟交易"];
const SELL = [["卖五", "13.14", "269"], ["卖四", "13.13", "502"], ["卖三", "13.12", "497"], ["卖二", "13.11", "622"], ["卖一", "13.10", "1990"]];
const BUY = [["买一", "13.09", "1228"], ["买二", "13.08", "1330"], ["买三", "13.07", "1440"], ["买四", "13.06", "503"], ["买五", "13.05", "1342"]];
const R = C.red;
const G = C.green;
const W = C.text;
const QUOTES: [string, string, string][] = [
  ["最新", "13.09", R], ["均价", "13.06", R], ["涨幅", "+3.15%", R], ["涨跌", "▲0.40", R], ["总手", "146.13万", W], ["金额", "19.08亿", C.cyan],
  ["换手*", "30.52%", W], ["量比", "2.63", R], ["最高", "13.30", R], ["最低", "12.47", G], ["今开", "12.98", R], ["昨收", "12.69", W],
  ["涨停", "13.96", R], ["跌停", "11.42", G], ["外盘", "74.84万", R], ["内盘", "71.28万", G], ["净资产", "3.42", W], ["ROE", "-4.31%", W],
  ["收益㈢", "-0.151", W], ["PE(动)*", "-64.99", W], ["股息^TTM", "0.02", W], ["股息率^TTM", "0.15%", W], ["总股本", "5.041亿", W], ["总值", "65.99亿", W],
  ["流通股", "4.788亿", W], ["流值", "62.67亿", W],
];
const BASICS: [string, string][] = [
  ["收益㈢", "-0.151"], ["PE(动)", "-64.99"], ["净资产", "3.42"], ["市净率", "3.83"], ["总收入", "17.6亿"], ["同比", "23.11%"], ["净利润", "-7615万"], ["同比", "16.28%"],
  ["毛利率", "23.46%"], ["净利率", "-3.54%"], ["ROE", "-4.31%"], ["负债率", "50.38%"], ["总股本", "5.041亿"], ["总值", "65.99亿"], ["流通股", "4.788亿"], ["流值", "62.67亿"],
];
const TICKS = [
  "14:55 13.04 - g2064 81", "14:56 13.05 u r232 46", ":03 13.05 - r1153 146", ":06 13.05 - r1705 140", ":09 13.05 - r444 43", ":12 13.04 d g550 70",
  ":15 13.05 u r406 39", ":18 13.06 u r357 50", ":21 13.05 d g545 48", ":24 13.05 - g619 38", ":27 13.05 - g500 54", ":30 13.04 d g244 42",
  ":33 13.06 u r1305 96", ":36 13.05 d g260 28", ":39 13.05 - g2876 184", ":42 13.04 d g242 34", ":45 13.05 u r505 35", ":48 13.04 d g205 18",
].map((t) => t.split(" "));

const Value = ({ v, c }: { v: string; c?: string }) => (
  <Bold $c={c}>
    {v.split(/([万亿家()])/).map((s, i) => (i % 2 ? <Thin key={i}>{s}</Thin> : s))}
  </Bold>
);
const Tag = ({ v }: { v: string }) => {
  const [name, sup] = v.split("^");
  return (
    <Label>
      {name}
      {sup && <Sup>{sup}</Sup>}
    </Label>
  );
};
const PaneTools = () => (
  <HeadRight>
    <button>改参数</button>
    <button>加指标</button>
    <button>换指标</button>
    <CloseBox aria-label="关闭"><Cross /></CloseBox>
  </HeadRight>
);

function PricePane() {
  return (
    <Pane>
      <div>
        <PaneHead $h={28} $rule>
          <StockName>积成电子</StockName>
          <FaintSmall>(日线,前复权)</FaintSmall>
          <HelpBox>?</HelpBox>
          <GearSlot><Gear /></GearSlot>
          <Faint>MA</Faint>
          {AVERAGES.map(([t, c]) => (
            <HeadValue key={t} $c={c}>
              {t}
              <Trend c={c} />
            </HeadValue>
          ))}
          <AverageTools>
            <button>融资融券</button>
            <CaretTool>
              设置均线
              <Caret $color="#8c8c8c" />
            </CaretTool>
          </AverageTools>
        </PaneHead>
        <Plot $h={572} viewBox="0 96 1890 572" preserveAspectRatio="none">
          <Grid ys={[145, 203, 261, 319, 378, 436, 494, 552, 610]} />
          <g stroke="#c4c4c4" strokeWidth="2">
            {STARS.map((x) => (
              <path key={x} d={`M${x} 100V110M${x - 4} 105H${x + 4}M${x - 3} 101.500L${x + 3} 108.500M${x + 3} 101.500L${x - 3} 108.500`} />
            ))}
          </g>
          <Bars d={CANDLES} />
          <Line pts={MA250} c="#ffff9c" />
          <Line pts={MA120} c="#00e0f0" />
          <Line pts={MA60} c="#b8b8b8" />
          <Line pts={trailing(MA5, 26)} c="#0f0" />
          <Line pts={trailing(MA5, 16)} c="#f0f" />
          <Line pts={trailing(MA5, 6)} c="#ff0" />
          <Line pts={join(MA5)} c="#fff" />
          <g fill="#808080" opacity="0.5">
            <rect x="1435" y="480" width="455" height="8" />
            <rect x="1814" y="344" width="76" height="3" />
            <rect x="1882" y="209" width="8" height="20" />
          </g>
          <g fill="#808080" fontSize="16">
            <text x="1435" y="505">7.08-7.23</text>
            <text x="1815" y="364">9.51-9.58</text>
            <text x="1804" y="246">11.54-11.91</text>
          </g>
          <g fill="#fff" fontSize="15" stroke="none">
            <text x="1794" y="130">13.36</text>
            <text x="679" y="654">4.33</text>
          </g>
          <g fill="none" stroke="#fff">
            <path d="M1836 125.500H1853M1846 121L1853 125.500L1846 130M679 649.500H662M669 645L662 649.500L669 654" />
          </g>
          {[867, 1444].map((x) => (
            <g key={x} fill="#f00">
              <path d={`M${x - 4} 655.500Q${x} 649 ${x + 4} 655.500Z`} />
              <text x={x} y="665" fontSize="12" fontWeight="700" textAnchor="middle">S</text>
            </g>
          ))}
        </Plot>
      </div>
      <PriceAxis>
        {["13.00", "12.00", "11.00", "10.00", "9.00", "8.00", "7.00", "6.00", "5.00"].map((v) => (
          <PriceTick key={v}>{v}</PriceTick>
        ))}
        <PriceTag>10.14</PriceTag>
      </PriceAxis>
    </Pane>
  );
}

function VolumePane() {
  return (
    <Pane>
      <div>
        <PaneHead $h={29}>
          <SubHelp>?</SubHelp>
          <SubValue $c="#808080">VOL(5,10)</SubValue>
          {[["VOLUME:146.126万", "#fff"], ["MAVOL1:75.211万", "#ff0"], ["MAVOL2:61.184万", "#f0f"]].map(([t, c]) => (
            <SubValue key={t} $c={c}>
              {t}
              <Trend c={c} />
            </SubValue>
          ))}
          <PaneTools />
        </PaneHead>
        <Plot $h={99} viewBox="0 698 1890 99" preserveAspectRatio="none">
          <Grid ys={[698, 747]} />
          <Bars d={VOLUMES} />
          <Line pts={join(VOLMA)} c="#ff0" />
          <Line pts={trailing(VOLMA, 7)} c="#f0f" />
        </Plot>
      </div>
      <SubAxis>
        <li>209.00</li>
        <li>104.00</li>
        <li>0.00</li>
      </SubAxis>
    </Pane>
  );
}

function MacdPane() {
  return (
    <Pane>
      <div>
        <PaneHead $h={29}>
          <SubHelp>?</SubHelp>
          <SubValue $c="#808080">MACD(12,26,9)</SubValue>
          <SubValue $c="#fff">DIF:0.354<Trend c="#fff" /></SubValue>
          <SubValue $c="#ff0">DEA:0.406<Trend down c="#ff0" /></SubValue>
          <SubValue $c="#f0f">MACD:-0.105<Trend c="#f0f" /></SubValue>
          <PaneTools />
        </PaneHead>
        <Plot $h={101} viewBox="0 827 1890 101" preserveAspectRatio="none">
          <Grid ys={[827, 876, 925]} />
          <Bars d={MACD.d} up="#f04444" />
          <Line pts={join(DIF)} c="#fff" />
          <Line pts={MACD.line} c="#ff0" />
        </Plot>
      </div>
      <SubAxis $boxed>
        <li>0.79</li>
        <li>0.10</li>
        <li>-0.58</li>
      </SubAxis>
    </Pane>
  );
}

function ForumPanel() {
  return (
    <>
      <NewsTabs>
        {NEWS.map((n, i) => (
          <NewsTab key={n} $on={i === 0}>{n}</NewsTab>
        ))}
        <DockButton aria-label="停靠"><Dock /></DockButton>
      </NewsTabs>
      <RankRow>
        <RankLogo>东方财富人气榜</RankLogo>
        <RankName>积成电子</RankName>
        A股即时排名<RankNumber>135</RankNumber>名
        <MoreButton>查看更多</MoreButton>
      </RankRow>
      <Forum>
        <PostTable>
          <colgroup>
            <col style={{ width: 85 }} />
            <col style={{ width: 56 }} />
            <col />
            <col style={{ width: 122 }} />
            <col style={{ width: 119 }} />
            <col style={{ width: 77 }} />
          </colgroup>
          <PostHead>
            <tr>
              <HeadCell $pad={10}>点击</HeadCell>
              <HeadCell>评论</HeadCell>
              <HeadCell>
                <TitleHead>
                  <TitleLabel>标题</TitleLabel>
                  <OutlineButton $w={160}>进入积成电子吧</OutlineButton>
                  <OutlineButton $w={99}>发新帖</OutlineButton>
                </TitleHead>
              </HeadCell>
              <HeadCell $right={3}>作者</HeadCell>
              <HeadCell $right={8} $hot>最后更新↓</HeadCell>
              <HeadCell $right={1}>发表日↓</HeadCell>
            </tr>
          </PostHead>
          <tbody>
            <Spacer />
            <PostRow $on>
              <NumCell $pad={11}>1</NumCell>
              <NumCell $pad={2}>0</NumCell>
              <TitleCell><PostTitle href="#post1">3月6日短线操盘复盘：止盈双票大肉 + 锁仓核心龙头，主线加速，明日紧盯情绪总龙</PostTitle></TitleCell>
              <EndCell $right={5} $dim>股海丶任我行</EndCell>
              <EndCell $right={8}>03-08 23:02</EndCell>
              <EndCell $right={17}>03-08</EndCell>
            </PostRow>
            <PostRow>
              <NumCell $pad={11}>816</NumCell>
              <NumCell $pad={2}>3</NumCell>
              <TitleCell><PostTitle href="#post2"><Picture />积成电子算电协同来了</PostTitle></TitleCell>
              <AuthorCell>股友16e387O635</AuthorCell>
              <EndCell $right={8}>03-08 23:01</EndCell>
              <EndCell $right={17}>03-08</EndCell>
            </PostRow>
            <PostRow>
              <NumCell $pad={11}>210</NumCell>
              <NumCell $pad={2}>2</NumCell>
              <TitleCell><PostTitle href="#post3">一、大盘分析指数日内延续强势，盘中尝试向上突破，但成交量萎缩近2000亿，量价背</PostTitle></TitleCell>
              <AuthorCell>怪哥龙空龙</AuthorCell>
              <EndCell $right={8}>03-08 23:00</EndCell>
              <EndCell $right={17}>03-08</EndCell>
            </PostRow>
          </tbody>
        </PostTable>
        <ScrollTrack>
          <ScrollUp />
          <ScrollThumb />
        </ScrollTrack>
      </Forum>
    </>
  );
}

/* long author names run leftwards into the free end of the title column */
const AuthorBox = styled.div`
  display: flex;
  justify-content: flex-end;
`;
const AuthorCell = ({ children }: { children: string }) => (
  <EndCell $right={5} $dim>
    <AuthorBox>{children}</AuthorBox>
  </EndCell>
);

function OrderColumn() {
  return (
    <ColA>
      <Status $h={29}><Label>交易状态</Label><span>休市</span></Status>
      <Pairs $h={27} $pad="0 6px" $cols="50px 78px 9px 54px 1fr">
        <Label>委比</Label>
        <Value v="20.20%" c={R} />
        <span />
        <Label>委差</Label>
        <Value v="1964" c={R} />
      </Pairs>
      <LinkRow $h={29}><Link href="#level2">购买L2查看十档行情</Link></LinkRow>
      <Book $sell>
        {SELL.map(([l, p, v]) => (
          <BookRow key={l}><Label>{l}</Label><Value v={p} c={R} /><Value v={v} /></BookRow>
        ))}
      </Book>
      <Book>
        {BUY.map(([l, p, v]) => (
          <BookRow key={l}><Label>{l}</Label><Value v={p} c={R} /><Value v={v} /></BookRow>
        ))}
      </Book>
      <QuotePairs $h={22} $pad="4px 6px 0" $cols="54px 74px 9px 54px 1fr">
        {QUOTES.map(([l, v, c], i) => (
          <React.Fragment key={l}>
            {i % 2 === 1 && <span />}
            <Tag v={l} />
            <QuoteValue><Value v={v} c={c} /></QuoteValue>
          </React.Fragment>
        ))}
      </QuotePairs>
      <FoldRow><Fold aria-label="收起"><FoldMark /></Fold></FoldRow>
      <Ticks>
        <colgroup>
          <col style={{ width: 51 }} />
          <col style={{ width: 75 }} />
          <col style={{ width: 20 }} />
          <col style={{ width: 69 }} />
          <col style={{ width: 44 }} />
          <col />
        </colgroup>
        <tbody>
          {TICKS.map(([t, p, d, v, n]) => (
            <TickRow key={t}>
              <TickCell $thin={t[0] === ":"} $c={t[0] === ":" ? C.dim : "#a8a8a8"}>{t}</TickCell>
              <TickCell $c={R}>{p}</TickCell>
              <TickArrow>{d !== "-" && <TickMark dir={d} />}</TickArrow>
              <TickCell $c={v[0] === "g" ? G : R}>{v.slice(1)}</TickCell>
              <TickCell>{n}</TickCell>
              <td />
            </TickRow>
          ))}
        </tbody>
      </Ticks>
    </ColA>
  );
}

const PROFIT: [number, number, number, string][] = [
  [51, 384, 12, G], [63, 383, 1, R], [75, 384, 1, G], [87, 366, 18, R], [121, 384, 14, G], [133, 384, 1, G], [145, 384, 1, G], [157, 362, 22, R], [191, 384, 11, G], [203, 383, 1, R], [215, 384, 2, G],
];

function BasicsColumn() {
  return (
    <ColB>
      <BTabs>
        <BTab>资金</BTab>
        <BTab $on>基本</BTab>
        <BTab>指数</BTab>
      </BTabs>
      <Pairs $h={19} $pad="4px 6px 1px 3px" $cols="54px 75px 3px 54px 1fr">
        {BASICS.map(([l, v], i) => (
          <React.Fragment key={i}>
            {i % 2 === 1 && <span />}
            <Tag v={l} />
            <QuoteValue><Value v={v} /></QuoteValue>
          </React.Fragment>
        ))}
      </Pairs>
      <SectionHead>利润趋势(亿)<MoreLink href="#profit">更多</MoreLink></SectionHead>
      <ProfitBox>
        <ProfitChart viewBox="0 343 265 104">
          <g fill="none" stroke="#444" shapeRendering="crispEdges">
            <path d="M265 348.500H22.500V423.500H265M22 384.500H265" />
            <path d="M22 366.500H265M22 402.500H265M61.500 349V423M100.500 349V423M139.500 349V423M178.500 349V423M217.500 349V423" strokeDasharray="4 3" />
          </g>
          {PROFIT.map(([x, y, h, c]) => (
            <rect key={x} x={x} y={y} width="6" height={h} fill={c} />
          ))}
          <g fill={C.text} fontSize="14" textAnchor="end">
            <text x="18" y="363">2</text>
            <text x="18" y="378">1</text>
            <text x="18" y="392">0</text>
            <text x="18" y="404">-1</text>
            <text x="18" y="419">-2</text>
          </g>
          <g fill={C.text} fontSize="14" textAnchor="middle">
            <text x="72" y="441">2023</text>
            <text x="142" y="441">2024</text>
            <text x="212" y="441">2025</text>
          </g>
        </ProfitChart>
      </ProfitBox>
      <SectionHead>十大流通股东<MoreLink href="#holders">更多</MoreLink></SectionHead>
      <Funds>
        <thead>
          <tr><th>公募</th><th>私募</th><th>社保</th><th>QFII</th></tr>
        </thead>
        <tbody>
          <tr>
            {["1家(0)", "1家(1)", "0家(0)", "0家(0)"].map((v, i) => (
              <td key={i}><Value v={v} /></td>
            ))}
          </tr>
        </tbody>
      </Funds>
      <Holders>
        <tbody>
          <tr><th><Label>股东情况</Label></th><td><Value v="25-09-30" /></td><td><Value v="25-06-30" /></td></tr>
          <tr><th><Label>股东户数</Label></th><td><Value v="4.12万" /></td><td><Value v="5.61万" /></td></tr>
          <tr><th><Label>人均流通股</Label></th><td><Value v="1.16万" /></td><td><Value v="8538" /></td></tr>
        </tbody>
      </Holders>
      <Report $row={22}>
        <colgroup><col style={{ width: 79 }} /><col style={{ width: 75 }} /><col /></colgroup>
        <thead><tr><th>年份</th><th>预测收益</th><th>预测PE</th></tr></thead>
        <tbody>
          {["2027", "2026", "2025"].map((y) => (
            <tr key={y}><td><Bold>{y}</Bold></td><td><Thin>----</Thin></td><td><Thin>----</Thin></td></tr>
          ))}
        </tbody>
      </Report>
      <Report $row={29}>
        <colgroup><col style={{ width: 79 }} /><col style={{ width: 75 }} /><col /></colgroup>
        <thead><tr><th>日期</th><th>评级</th><th>机构名称</th></tr></thead>
        <tbody>
          {["13/10/29", "13/08/24", "13/04/09"].map((d) => (
            <tr key={d}><td><Bold>{d}</Bold></td><td><Thin>强烈推荐</Thin></td><td><Thin>民生证券</Thin></td></tr>
          ))}
          {Array.from({ length: 12 }, (_, i) => (
            <tr key={i}><td><Bold>——</Bold></td><td><Thin>——</Thin></td><td><Thin>——</Thin></td></tr>
          ))}
        </tbody>
      </Report>
    </ColB>
  );
}

export default function App() {
  return (
    <Page>
      <Global />
      <TitleStrip />
      <MenuBar>
        {MENU.map(([t, w, drop]) => (
          <MenuItem key={t} $w={w}>{t}{drop && <Caret />}</MenuItem>
        ))}
        <MenuEnd><button>打开导航</button><button>返回</button></MenuEnd>
      </MenuBar>
      <Body>
        <Left>
          <Toolbar>
            <ToolGroup>
              {PERIODS.map(([t, w]) => (
                <Tool key={t} $w={w} $on={t === "日线"}>
                  {t}
                  {(t === "5日" || t === "更多周期") && <Caret $color="#a8a8a8" />}
                </Tool>
              ))}
            </ToolGroup>
            <ToolGroup>
              <Tool $w={27} aria-label="解锁"><Unlock /></Tool>
              <Tool $w={27} aria-label="放大"><Plus /></Tool>
              <Tool $w={27} aria-label="缩小"><Minus /></Tool>
              <Tool $w={60} $on>复权<Caret $color={C.orange} /></Tool>
              <Tool $w={60}>叠加<Caret $color="#a8a8a8" /></Tool>
              <Tool $w={59}>筹码<Dot /></Tool>
              <Tool $w={59}>画线</Tool>
              <Tool $w={68}>显示<Caret $color="#a8a8a8" /><Dot /></Tool>
              <Tool $w={59}>简约</Tool>
              <Tool $w={60}>隐藏<Fast /></Tool>
              <Tool $w={27} aria-label="全屏"><Expand /></Tool>
            </ToolGroup>
          </Toolbar>
          <Charts>
            <PricePane />
            <VolumePane />
            <MacdPane />
            <Overlay viewBox="0 68 1963 861" preserveAspectRatio="none">
              <rect x="63.500" y="289" width="1834" height="324" fill="none" stroke={C.mark} strokeWidth="3" />
              <ellipse cx="1825" cy="786" rx="104" ry="44" fill="none" stroke={C.mark} strokeWidth="7" />
              {ARROWS.map((p) => (
                <polygon key={p} points={p} fill={C.mark} />
              ))}
            </Overlay>
          </Charts>
          <DateAxis>
            <Year>2023</Year>
            <Year>2024</Year>
            <Year>2025</Year>
            <Year>2026</Year>
            <DateTag>2025/03/25/二</DateTag>
            <PageButton $side="left" aria-label="向前"><Chevrons /></PageButton>
            <PageButton $side="right" aria-label="向后"><Chevrons flip /></PageButton>
          </DateAxis>
          <Indicators>
            <IndicatorChip>指标</IndicatorChip>
            {INDICATORS.map((t) => (
              <Indicator key={t} $on={["成交量", "均线", "MACD"].includes(t)} $latin={/^[A-Z]/.test(t)}>{t}</Indicator>
            ))}
            <IndicatorChip>模板</IndicatorChip>
          </Indicators>
          <HSplit>
            <HArrow />
            <Grip $x="25%" $y="1px" $w={10} $h={6} />
            <Grip $x="75%" $y="1px" $w={10} $h={6} />
          </HSplit>
          <ForumPanel />
        </Left>
        <Splitter>
          <SplitArrow />
          <Grip $x="1px" $y="945px" $w={6} $h={10} />
        </Splitter>
        <Right>
          <QuoteHead>
            <div>
              <QuoteName>
                <Prev aria-label="上一只" />
                <Code>002339</Code>
                <Name>积成电子</Name>
                <Next aria-label="下一只" />
              </QuoteName>
              <QuotePrice>
                <BigPrice>13.09</BigPrice>
                <Stack><span>+0.40</span><span>+3.15%</span></Stack>
              </QuotePrice>
            </div>
            <div>
              <HeadTop><Badge>融</Badge><Link href="#trial">免费体验L2行情</Link></HeadTop>
              <HeadActions>
                <Action>自选<Dash /><Caret $color="#b4b4b4" /></Action>
                <Action>提醒 <Bell /></Action>
                <Action $hot>交易<Swap /></Action>
              </HeadActions>
            </div>
          </QuoteHead>
          <Columns>
            <OrderColumn />
            <BasicsColumn />
          </Columns>
        </Right>
      </Body>
    </Page>
  );
}
